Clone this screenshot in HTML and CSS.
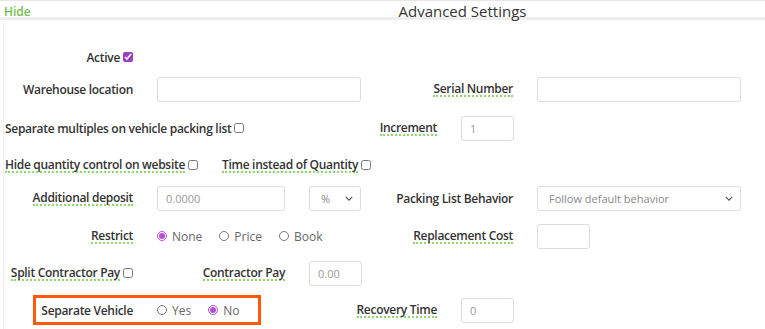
FILE: index.html
```html
<!DOCTYPE html>
<html lang="en">
<head>
    <meta charset="UTF-8">
    <title>Advanced Settings</title>
    <link rel="stylesheet" href="styles.css">
</head>
<body>
    <div class="header">
        <a class="hide-link" href="#">Hide</a>
        <div class="title">Advanced Settings</div>
    </div>

    <div class="panel">
        <div class="form-grid">
            <!-- row 1 -->
            <div class="cell label r1 c1">Active <input type="checkbox" class="check" checked></div>

            <!-- row 2 -->
            <div class="cell label r2 c1">Warehouse location</div>
            <div class="cell r2 c2-4"><input type="text" class="field wide"></div>
            <div class="cell label r2 c5-6"><span class="tip">Serial Number</span></div>
            <div class="cell r2 c7-9"><input type="text" class="field wide"></div>

            <!-- row 3 -->
            <div class="cell label left r3 c1-4">Separate multiples on vehicle packing list <input type="checkbox" class="check"></div>
            <div class="cell label r3 c4-5"><span class="tip">Increment</span></div>
            <div class="cell r3 c6"><input type="text" class="field small" value="1"></div>

            <!-- row 4 -->
            <div class="cell label left r4 c1-2"><span class="tip">Hide quantity control on website</span> <input type="checkbox" class="check"></div>
            <div class="cell label left r4 c3-5"><span class="tip">Time instead of Quantity</span> <input type="checkbox" class="check"></div>

            <!-- row 5 -->
            <div class="cell label r5 c1"><span class="tip">Additional deposit</span></div>
            <div class="cell r5 c2-3"><input type="text" class="field wide" value="0.0000"></div>
            <div class="cell r5 c4">
                <div class="select-wrap">
                    <select class="field select"><option>%</option></select>
                    <svg class="chevron" viewBox="0 0 10 6" width="8" height="5"><path d="M1 1l4 4 4-4" fill="none" stroke="#555" stroke-width="1.6"/></svg>
                </div>
            </div>
            <div class="cell label r5 c5-6">Packing List Behavior</div>
            <div class="cell r5 c7-9">
                <div class="select-wrap">
                    <select class="field select"><option>Follow default behavior</option></select>
                    <svg class="chevron" viewBox="0 0 10 6" width="8" height="5"><path d="M1 1l4 4 4-4" fill="none" stroke="#555" stroke-width="1.6"/></svg>
                </div>
            </div>

            <!-- row 6 -->
            <div class="cell label r6 c1"><span class="tip">Restrict</span></div>
            <div class="cell r6 c2-4 radios">
                <label class="radio"><input type="radio" name="restrict" checked> None</label>
                <label class="radio"><input type="radio" name="restrict"> Price</label>
                <label class="radio"><input type="radio" name="restrict"> Book</label>
            </div>
            <div class="cell label r6 c5-6"><span class="tip">Replacement Cost</span></div>
            <div class="cell r6 c7"><input type="text" class="field small"></div>

            <!-- row 7 -->
            <div class="cell label r7 c1"><span class="tip">Split Contractor Pay</span> <input type="checkbox" class="check"></div>
            <div class="cell label r7 c2-3"><span class="tip">Contractor Pay</span></div>
            <div class="cell r7 c4"><input type="text" class="field small" value="0.00"></div>

            <!-- row 8 -->
            <div class="cell label r8 c1">Separate Vehicle</div>
            <div class="cell r8 c2-3 radios">
                <label class="radio"><input type="radio" name="vehicle"> Yes</label>
                <label class="radio"><input type="radio" name="vehicle" checked> No</label>
            </div>
            <div class="cell label r8 c4-5"><span class="tip">Recovery Time</span></div>
            <div class="cell r8 c6"><input type="text" class="field small" value="0"></div>
        </div>

        <div class="highlight"></div>
    </div>
</body>
</html>
```

FILE: styles.css
```css
body {
    margin: 0;
    padding: 0;
    font-family: 'Open Sans', 'Liberation Sans', sans-serif;
    color: #333;
    background: #fff;
    width: 765px;
    height: 329px;
    overflow: hidden;
}

.header {
    display: grid;
    grid-template-columns: 160px 1fr;
    align-items: center;
    height: 16px;
    border-top: 1px solid #e6e6e6;
    border-bottom: 3px solid #eeeeee;
    padding-left: 4px;
}

.hide-link {
    color: #6fc04c;
    font-weight: 600;
    font-size: 12px;
    text-decoration: none;
}

.title {
    text-align: center;
    font-size: 15px;
    color: #333;
    padding-right: 4px;
}

.panel {
    position: relative;
    margin-left: 3px;
    border-left: 1px solid #f0f0f0;
    height: 310px;
}

.form-grid {
    display: grid;
    grid-template-columns: 141px repeat(8, 76px);
    grid-template-rows: 34px 30px 48px 26px 40px 36px 38px 36px;
    padding-top: 20px;
}

.cell {
    display: flex;
    align-items: center;
    padding: 0 12px;
    min-width: 0;
    white-space: nowrap;
}

.label {
    justify-content: flex-end;
    font-size: 12px;
    font-weight: 600;
    letter-spacing: -0.3px;
    color: #333;
}

.label.left {
    justify-content: flex-start;
    padding-left: 1px;
}

.tip {
    border-bottom: 2px dotted #8fd86c;
    line-height: 13px;
}

.check {
    width: 10px;
    height: 10px;
    margin: 0 0 0 3px;
    accent-color: #9b3fc0;
}

.field {
    box-sizing: border-box;
    height: 25px;
    border: 1px solid #dcdcdc;
    border-radius: 3px;
    background: #fff;
    font-family: inherit;
    font-size: 11px;
    color: #999;
    padding: 0 8px;
    outline: none;
}

.wide {
    width: 100%;
}

.small {
    width: 53px;
}

.select-wrap {
    position: relative;
    width: 100%;
}

.select {
    -webkit-appearance: none;
    appearance: none;
    width: 100%;
    padding-left: 11px;
    color: #888;
}

.chevron {
    position: absolute;
    right: 8px;
    top: 10px;
    pointer-events: none;
}

.radios {
    gap: 17px;
}

.radio {
    display: flex;
    align-items: center;
    font-size: 12px;
    color: #666;
}

.radio input {
    width: 10px;
    height: 10px;
    margin: 0 5px 0 0;
    accent-color: #b24fd6;
}

.r1 { grid-row: 1; }
.r2 { grid-row: 2; }
.r3 { grid-row: 3; }
.r4 { grid-row: 4; }
.r5 { grid-row: 5; }
.r6 { grid-row: 6; }
.r7 { grid-row: 7; }
.r8 { grid-row: 8; }

.c1 { grid-column: 1; }
.c4 { grid-column: 4; }
.c6 { grid-column: 6; }
.c7 { grid-column: 7; }
.c1-2 { grid-column: 1 / 3; }
.c1-4 { grid-column: 1 / 5; }
.c2-3 { grid-column: 2 / 4; }
.c2-4 { grid-column: 2 / 5; }
.c3-5 { grid-column: 3 / 6; }
.c4-5 { grid-column: 4 / 6; }
.c5-6 { grid-column: 5 / 7; }
.c7-9 { grid-column: 7 / 10; }

.highlight {
    position: absolute;
    left: 29px;
    top: 275px;
    width: 222px;
    height: 24px;
    border: 3px solid #ff5a0a;
    pointer-events: none;
}
```
